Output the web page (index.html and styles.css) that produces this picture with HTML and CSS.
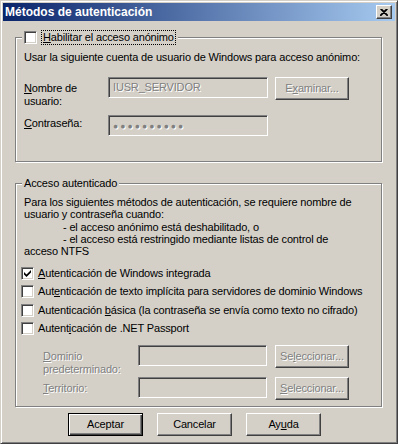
FILE: index.html
```html
<!DOCTYPE html>
<html>
	<head>
		<meta charset="utf-8">
		<title>Métodos de autenticación</title>
		<link rel="stylesheet" href="styles.css">
	</head>
	<body>
		<div class="window">
			<!-- barra de título -->
			<div class="titlebar">
				<span class="title">Métodos de autenticación</span>
				<span class="close-btn">
					<svg width="8" height="7" viewBox="0 0 8 7"><path d="M0.5 0 L7.5 7 M1.5 0 L8 6.5 M7.5 0 L0.5 7 M6.5 0 L0 6.5" stroke="#000" stroke-width="1.1" fill="none"/></svg>
				</span>
			</div>

			<div class="dialog-body">
				<!-- acceso anónimo -->
				<div class="group group-anon">
					<div class="group-title legend-check">
						<span class="checkbox"></span>
						<span class="focus-label"><u>H</u>abilitar el acceso anónimo</span>
					</div>
					<p class="group-text">Usar la siguiente cuenta de usuario de Windows para acceso anónimo:</p>
					<div class="field-row row-user">
						<span class="field-label label-two"><u>N</u>ombre de<br>usuario:</span>
						<div class="input input-wide disabled-text">IUSR_SERVIDOR</div>
						<div class="btn btn-side disabled-text">E<u>x</u>aminar...</div>
					</div>
					<div class="field-row row-pass">
						<span class="field-label label-one"><u>C</u>ontraseña:</span>
						<div class="input input-wide"><span class="dots">●●●●●●●●●●</span></div>
					</div>
				</div>

				<!-- acceso autenticado -->
				<div class="group group-auth">
					<div class="group-title">Acceso autenticado</div>
					<p class="auth-text">
						Para los siguientes métodos de autenticación, se requiere nombre de<br>
						usuario y contraseña cuando:<br>
						<span class="indent">- el acceso anónimo está deshabilitado, o</span><br>
						<span class="indent">- el acceso está restringido mediante listas de control de</span><br>
						acceso NTFS
					</p>
					<div class="check-list">
						<div class="check-row">
							<span class="checkbox checked">
								<svg width="7" height="7" viewBox="0 0 7 7"><path d="M0 2 L0 4.5 L2.5 7 L7 2.5 L7 0 L2.5 4.5 Z" fill="#000"/></svg>
							</span>
							<span class="check-label"><u>A</u>utenticación de Windows integrada</span>
						</div>
						<div class="check-row">
							<span class="checkbox"></span>
							<span class="check-label">Aut<u>e</u>nticación de texto implícita para servidores de dominio Windows</span>
						</div>
						<div class="check-row">
							<span class="checkbox"></span>
							<span class="check-label">Autenticación <u>b</u>ásica (la contraseña se envía como texto no cifrado)</span>
						</div>
						<div class="check-row">
							<span class="checkbox"></span>
							<span class="check-label">Autent<u>i</u>cación de .NET Passport</span>
						</div>
					</div>
					<div class="field-row row-domain">
						<span class="field-label domain-label label-two disabled-text"><u>D</u>ominio<br>predeterminado:</span>
						<div class="input input-narrow"></div>
						<div class="btn btn-side disabled-text">Se<u>l</u>eccionar...</div>
					</div>
					<div class="field-row row-realm">
						<span class="field-label domain-label label-two disabled-text"><u>T</u>erritorio:</span>
						<div class="input input-narrow"></div>
						<div class="btn btn-side disabled-text"><u>S</u>eleccionar...</div>
					</div>
				</div>

				<!-- botones -->
				<div class="footer">
					<div class="btn btn-main btn-default">Aceptar</div>
					<div class="btn btn-main">Cancelar</div>
					<div class="btn btn-main">Ay<u>u</u>da</div>
				</div>
			</div>
		</div>
	</body>
</html>
```

FILE: styles.css
```css
/* general */
* {
	margin: 0;
	padding: 0;
	box-sizing: border-box;
}

body {
	font-family: "Liberation Sans", Arial, sans-serif;
	font-size: 11px;
	letter-spacing: -0.16px;
	line-height: 13px;
	color: #000;
	background-color: #d4d0c8;
	width: 398px;
	height: 444px;
	overflow: hidden;
}

u {
	text-decoration: underline;
	text-underline-offset: 1px;
}

/* ventana */
.window {
	width: 398px;
	height: 444px;
	padding: 2px;
	border: 1px solid;
	border-color: #d4d0c8 #404040 #404040 #d4d0c8;
	box-shadow: inset 1px 1px 0 #fff, inset -1px -1px 0 #808080;
	display: flex;
	flex-direction: column;
}

.titlebar {
	height: 18px;
	flex-shrink: 0;
	display: flex;
	align-items: center;
	justify-content: space-between;
	padding: 0 3px 0 2px;
	background: linear-gradient(to right, #0a246a, #a6caf0);
}

.title {
	color: #fff;
	font-weight: bold;
	font-size: 12px;
	letter-spacing: 0;
}

.close-btn {
	width: 16px;
	height: 14px;
	display: flex;
	align-items: center;
	justify-content: center;
	background-color: #d4d0c8;
	border: 1px solid;
	border-color: #fff #404040 #404040 #fff;
	box-shadow: inset -1px -1px 0 #808080;
}

.dialog-body {
	flex: 1;
	padding: 16px 13px 0 12px;
}

/* cuadros de grupo */
.group {
	position: relative;
	border: 1px solid #808080;
	box-shadow: 1px 1px 0 #fff, inset 1px 1px 0 #fff;
	padding: 0 8px;
}

.group-title {
	position: absolute;
	top: -7px;
	left: 6px;
	height: 13px;
	padding: 0 2px;
	background-color: #d4d0c8;
	display: flex;
	align-items: center;
}

.legend-check {
	top: -8px;
	height: 15px;
}

.focus-label {
	margin-left: 4px;
	padding: 0 1px;
	border: 1px dotted #000;
	line-height: 13px;
}

.group-anon {
	height: 125px;
	padding-top: 13px;
}

.group-text {
	white-space: nowrap;
}

/* filas de campos */
.field-row {
	height: 23px;
	display: flex;
	align-items: flex-start;
}

.row-user {
	margin-top: 13px;
}

.row-pass {
	margin-top: 15px;
}

.field-label {
	width: 84px;
	flex-shrink: 0;
}

.label-two {
	padding-top: 5px;
}

.label-one {
	padding-top: 2px;
}

.input {
	height: 21px;
	border: 1px solid;
	border-color: #808080 #fff #fff #808080;
	box-shadow: inset 1px 1px 0 #404040, inset -1px -1px 0 #d4d0c8;
	background-color: #d4d0c8;
	padding: 3px 0 0 4px;
	white-space: nowrap;
	overflow: hidden;
}

.input-wide {
	width: 160px;
}

.input-narrow {
	width: 129px;
}

.dots {
	color: #808080;
	font-size: 8.5px;
	letter-spacing: 2.1px;
	text-shadow: 1px 1px 0 #fff;
	line-height: 13px;
}

.disabled-text {
	color: #808080;
	text-shadow: 1px 1px 0 #fff;
}

/* botones */
.btn {
	height: 23px;
	display: flex;
	align-items: center;
	justify-content: center;
	border: 1px solid;
	border-color: #fff #404040 #404040 #fff;
	box-shadow: inset -1px -1px 0 #808080;
	background-color: #d4d0c8;
	white-space: nowrap;
}

.btn-side {
	width: 74px;
	margin-left: 7px;
}

.btn-main {
	width: 75px;
}

.btn-default {
	border: 1px solid #000;
	box-shadow: inset 1px 1px 0 #fff, inset -1px -1px 0 #404040, inset -2px -2px 0 #808080;
}

/* acceso autenticado */
.group-auth {
	margin-top: 21px;
	padding-top: 12px;
	padding-bottom: 6px;
}

.auth-text {
	line-height: 12.25px;
	white-space: nowrap;
}

.indent {
	padding-left: 39px;
}

.check-list {
	margin: 7px 0 0 -3px;
}

.check-row {
	height: 18.33px;
	display: flex;
	align-items: center;
	white-space: nowrap;
}

.checkbox {
	width: 13px;
	height: 13px;
	flex-shrink: 0;
	display: flex;
	align-items: center;
	justify-content: center;
	background-color: #fff;
	border: 1px solid;
	border-color: #808080 #fff #fff #808080;
	box-shadow: inset 1px 1px 0 #404040, inset -1px -1px 0 #d4d0c8;
}

.check-label {
	margin-left: 4px;
}

.row-domain {
	margin-top: 7px;
	padding-left: 19px;
}

.row-realm {
	margin-top: 9px;
	padding-left: 19px;
}

.domain-label {
	width: 95px;
}

.row-domain .btn-side,
.row-realm .btn-side {
	margin-left: 8px;
}

.footer {
	display: flex;
	gap: 14px;
	margin-top: 6px;
	padding-left: 53px;
}
```
